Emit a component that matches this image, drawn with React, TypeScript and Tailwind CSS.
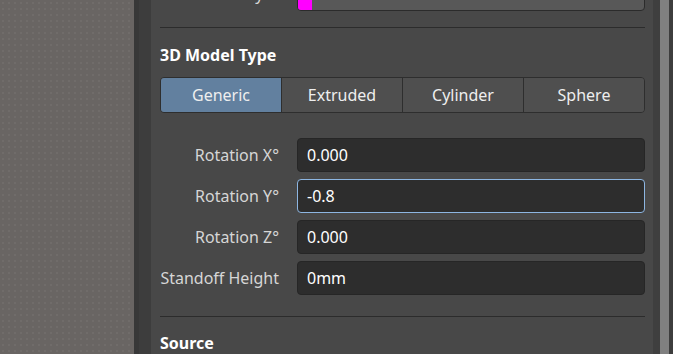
const segments = ["Generic", "Extruded", "Cylinder", "Sphere"];

const rows = [
  { label: "Rotation X°", value: "0.000" },
  { label: "Rotation Y°", value: "-0.8", focused: true },
  { label: "Rotation Z°", value: "0.000" },
  { label: "Standoff Height", value: "0mm" },
];

export default function App() {
  return (
    <div
      className="flex h-[354px] w-[673px] overflow-hidden text-[16px] text-[#d6d6d6]"
      style={{ fontFamily: '"Noto Sans", "Open Sans", sans-serif' }}
    >
      {/* canvas behind the panel */}
      <div className="w-[134px] shrink-0 bg-[#696563] bg-[radial-gradient(#706c6a_1px,transparent_1px)] bg-[length:6px_6px]" />
      <div className="w-[5px] shrink-0 bg-[#383838]" />
      <div className="w-[12px] shrink-0 bg-[#3d3d3d]" />

      {/* properties panel */}
      <div className="flex w-[502px] shrink-0 flex-col bg-[#484848] pl-[9px] pr-[8px]">
        {/* Layer row, scrolled mostly out of view */}
        <div className="-mt-[23px] flex items-center gap-[18px]">
          <div className="w-[119px] text-right">Layer</div>
          <div className="flex h-[34px] flex-1 overflow-hidden rounded-[4px] border border-[#2b2b2b] bg-[#585858]">
            <div className="w-[14px] bg-[#ff00ff]" />
            <div className="flex items-center pl-[10px] text-white">Mechanical 1</div>
          </div>
        </div>

        <div className="mt-[16px] h-px bg-[#2c2c2c]" />

        <div className="mt-[16px] text-[16px] font-bold leading-[22px] text-white">3D Model Type</div>

        {/* model type segmented control */}
        <div className="mt-[11px] flex h-[36px] overflow-hidden rounded-[4px] border border-[#2e2e2e]">
          {segments.map((s, i) => (
            <div
              key={s}
              className={
                i === 0
                  ? "flex flex-1 items-center justify-center bg-[#62809f] text-[#eeeeee]"
                  : "flex flex-1 items-center justify-center border-l border-[#2e2e2e] bg-[#4f4f4f] text-[#eeeeee]"
              }
            >
              {s}
            </div>
          ))}
        </div>

        {/* numeric fields */}
        <div className="mt-[25px] flex flex-col gap-[7px]">
          {rows.map((r) => (
            <div key={r.label} className="flex items-center gap-[18px]">
              <div className="w-[119px] whitespace-nowrap text-right">{r.label}</div>
              <div
                className={
                  r.focused
                    ? "flex h-[34px] flex-1 items-center rounded-[4px] border border-[#8db6e2] bg-[#2d2d2d] pl-[9px] text-white"
                    : "flex h-[34px] flex-1 items-center rounded-[4px] border border-[#262626] bg-[#2d2d2d] pl-[9px] text-white"
                }
              >
                {r.value}
              </div>
            </div>
          ))}
        </div>

        <div className="mt-[21px] h-px bg-[#2c2c2c]" />

        <div className="mt-[15px] text-[16px] font-bold leading-[22px] text-white">Source</div>
      </div>

      {/* scrollbar */}
      <div className="w-[7px] shrink-0 bg-[#3f3f3f]" />
      <div className="w-[9px] shrink-0 bg-[#808080]" />
      <div className="w-[4px] shrink-0 bg-[#3d3d3d]" />
    </div>
  );
}
